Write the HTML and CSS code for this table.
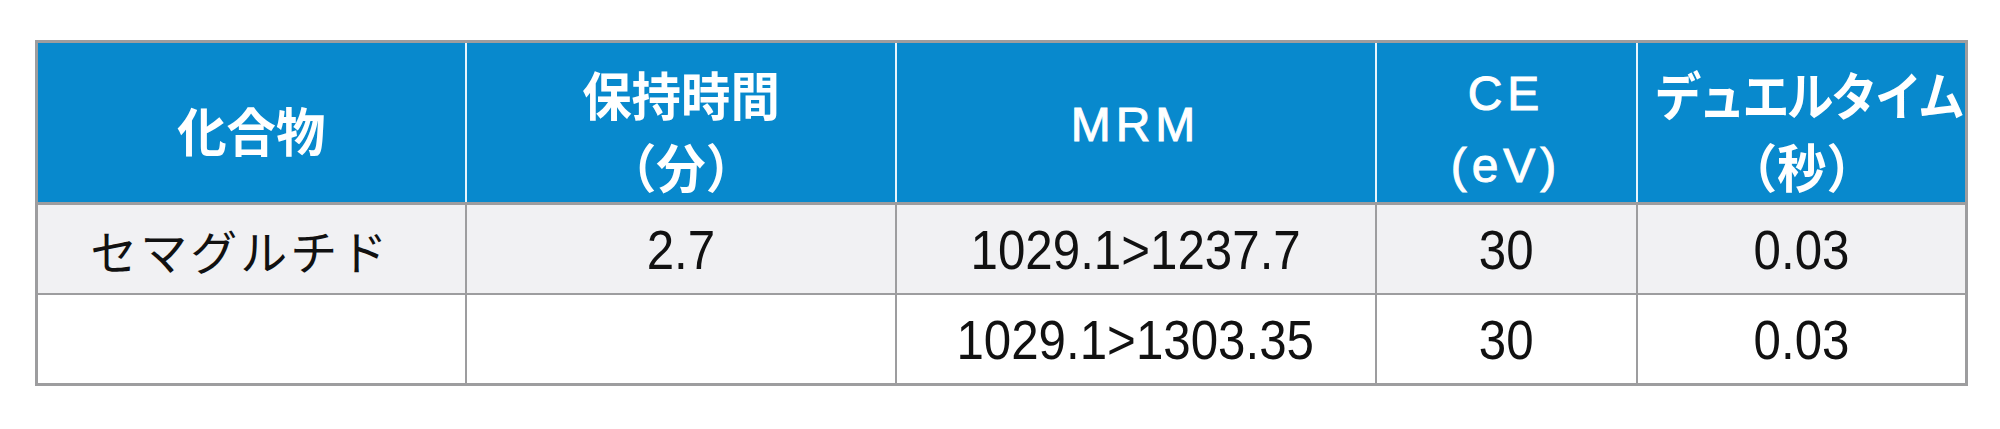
FILE: index.html
```html
<!DOCTYPE html>
<html lang="ja">
<head>
<meta charset="utf-8">
<title>MRM</title>
<link rel="stylesheet" href="styles.css">
</head>
<body>
<div class="wrap">
<table class="data">
<colgroup>
<col class="c1"><col class="c2"><col class="c3"><col class="c4"><col class="c5">
</colgroup>
<thead>
<tr>
<th><span class="line jp">化合物</span></th>
<th><span class="line jp">保持時間</span><span class="line jp">（分）</span></th>
<th class="single"><span class="line lat">MRM</span></th>
<th><span class="line lat">CE</span><span class="line lat">(eV)</span></th>
<th><span class="line jp kana">デュエルタイム</span><span class="line jp">（秒）</span></th>
</tr>
</thead>
<tbody>
<tr class="odd">
<td class="name">セマグルチド</td>
<td><span class="num">2.7</span></td>
<td><span class="num">1029.1&gt;1237.7</span></td>
<td><span class="num">30</span></td>
<td><span class="num">0.03</span></td>
</tr>
<tr class="even">
<td class="name"></td>
<td></td>
<td><span class="num">1029.1&gt;1303.35</span></td>
<td><span class="num">30</span></td>
<td><span class="num">0.03</span></td>
</tr>
</tbody>
</table>
</div>
</body>
</html>
```
FILE: styles.css
```css
html, body {
  margin: 0;
  padding: 0;
  background: #ffffff;
}
.wrap {
  padding: 40px 0 0 35px;
}
.data {
  border-collapse: collapse;
  table-layout: fixed;
  width: 1930px;
  border: 3px solid #9d9d9f;
}
.c1 { width: 429px; }
.c2 { width: 430px; }
.c3 { width: 480px; }
.c4 { width: 261px; }
.c5 { width: 330px; }

.data th {
  background: #0889cd;
  color: #ffffff;
  height: 162px;
  padding: 14px 0 0 0;
  box-sizing: border-box;
  text-align: center;
  vertical-align: middle;
  font-size: 0;
  line-height: 0;
  white-space: nowrap;
  border-left: 2px solid #e6f5fd;
  border-right: 2px solid #e6f5fd;
  border-bottom: 3px solid #9d9d9f;
}
.data th.single { padding-top: 4px; }
.data th:first-child { border-left: 3px solid #9d9d9f; }
.data th:last-child { border-right: 3px solid #9d9d9f; }
.line {
  display: block;
  height: 72px;
  line-height: 72px;
}
.jp {
  font-family: "Noto Sans CJK JP", "Noto Sans", sans-serif;
  font-size: 52px;
  font-weight: 700;
  letter-spacing: 0;
  transform: scaleX(0.95);
}
.kana {
  letter-spacing: -3px;
  transform: scaleX(0.9);
}
.lat {
  font-family: "Liberation Sans", sans-serif;
  font-size: 48px;
  font-weight: 400;
  letter-spacing: 5px;
  -webkit-text-stroke: 1px #ffffff;
}
.data td {
  height: 88px;
  padding: 0;
  text-align: center;
  vertical-align: middle;
  white-space: nowrap;
  border: 2px solid #9d9d9f;
  color: #111111;
}
.odd td { background: #f1f1f3; }
.even td { background: #ffffff; }
.data td.name {
  font-family: "Noto Sans CJK JP", "Noto Sans", sans-serif;
  font-size: 47px;
  letter-spacing: 3px;
  padding-right: 22px;
}
.num {
  display: inline-block;
  font-family: "Liberation Sans", sans-serif;
  font-size: 56px;
  transform: scaleX(0.88);
}
```
